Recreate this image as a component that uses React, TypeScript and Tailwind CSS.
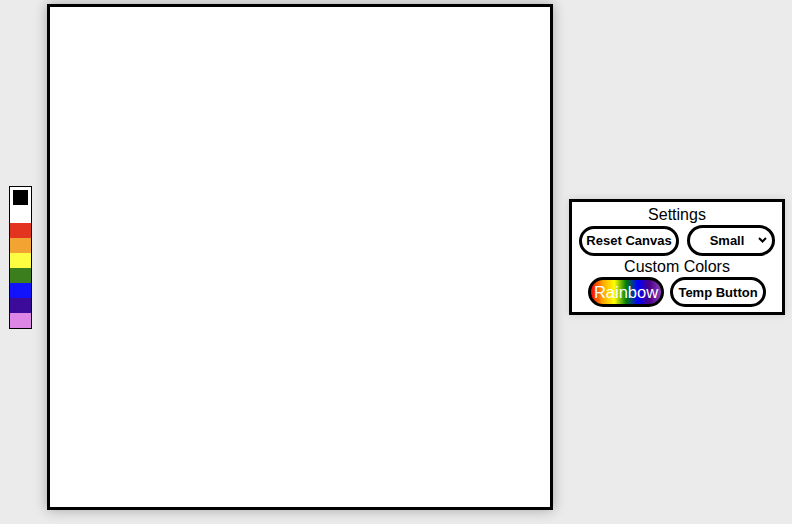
import React, { useState } from 'react';

const swatches = ['#ffffff', '#e3341f', '#f2a332', '#fdfd41', '#3b7e1e', '#1212fb', '#3d0b99', '#dd86e6'];

const PillButton: React.FC<{ children: React.ReactNode; className?: string }> = ({ children, className = '' }) => (
  <button
    className={`h-[30px] rounded-full border-[3px] border-black bg-white text-[13px] font-bold text-black leading-none ${className}`}
  >
    {children}
  </button>
);

export default function App() {
  const [size, setSize] = useState('Small');

  return (
    <div
      className="min-h-screen bg-[#ebebeb] pl-[9px] pt-[4px]"
      style={{ fontFamily: '"Liberation Sans", Arial, sans-serif' }}
    >
      <div className="flex items-center">
        {/* Color palette */}
        <div className="flex w-[23px] flex-col border border-black">
          <div className="h-[21px] w-[21px] border-[3px] border-white bg-black" />
          {swatches.map((c) => (
            <div key={c} className="h-[15px] w-[21px]" style={{ backgroundColor: c }} />
          ))}
        </div>

        {/* Drawing canvas */}
        <div className="ml-[15px] h-[506px] w-[506px] border-[3px] border-black bg-white shadow-[0_0_12px_rgba(0,0,0,0.3)]" />

        {/* Settings */}
        <div className="ml-[16px] flex w-[216px] flex-col items-center gap-[1px] border-[3px] border-black bg-white pt-[4px] pb-[5px] text-black shadow-[0_0_8px_rgba(0,0,0,0.12)]">
          <div className="text-[16px] leading-[18px]">Settings</div>
          <div className="flex items-center gap-[8px]">
            <PillButton className="w-[100px]">Reset Canvas</PillButton>
            <div className="relative">
              <select
                value={size}
                onChange={(e) => setSize(e.target.value)}
                className="h-[31px] w-[88px] appearance-none rounded-full border-[3px] border-black bg-white pr-[14px] pl-[6px] text-center text-[13px] font-bold text-black"
              >
                <option>Small</option>
                <option>Medium</option>
                <option>Large</option>
              </select>
              <svg
                className="pointer-events-none absolute top-[12px] right-[8px]"
                width="9"
                height="6"
                viewBox="0 0 9 6"
              >
                <path d="M1 1 L4.5 4.5 L8 1" fill="none" stroke="black" strokeWidth="2" />
              </svg>
            </div>
          </div>
          <div className="mt-[1px] text-[16px] leading-[18px]">Custom Colors</div>
          <div className="flex items-center gap-[6px]">
            <button className="h-[30px] w-[76px] rounded-full border-[3px] border-black bg-[linear-gradient(to_right,red,orange,yellow,green,blue,indigo,#8b3fbf)] text-[16.5px] leading-none text-white">
              Rainbow
            </button>
            <PillButton className="w-[96px]">Temp Button</PillButton>
          </div>
        </div>
      </div>
    </div>
  );
}
